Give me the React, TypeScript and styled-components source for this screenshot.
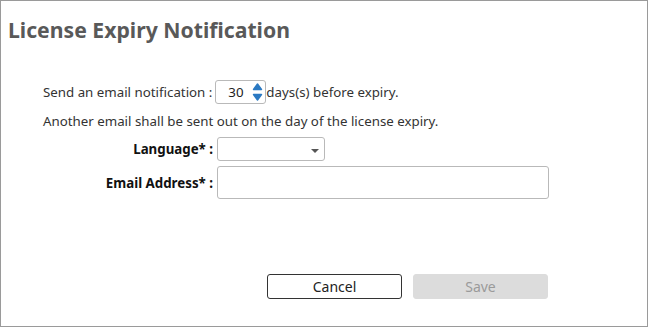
import React from "react";
import styled, { createGlobalStyle } from "styled-components";

const Global = createGlobalStyle`
  html, body { margin: 0; padding: 0; background: #fff; }
  body { font-family: "Noto Sans", "Open Sans", sans-serif; }
  * { box-sizing: border-box; }
`;

const Frame = styled.div`
  width: 648px;
  height: 327px;
  border: 1px solid #9a9a9a;
  display: flex;
  flex-direction: column;
  color: #333;
  font-size: 13.3px;
`;

const Title = styled.h1`
  margin: 15px 0 0 7px;
  font-size: 21.2px;
  line-height: 28px;
  font-weight: 700;
  color: #595959;
`;

const Body = styled.div`
  display: flex;
  flex-direction: column;
  padding-left: 42px;
  margin-top: 36px;
`;

const InlineRow = styled.div`
  display: flex;
  align-items: center;
  height: 24px;
  white-space: nowrap;
`;

const Text = styled.span`
  line-height: 18px;
`;

const NumberBox = styled.div`
  margin-left: 3px;
  width: 51px;
  height: 24px;
  border: 1px solid #b9b9b9;
  border-radius: 3px;
  display: flex;
  align-items: center;
  justify-content: space-between;
  padding: 0 2px 0 12px;
  color: #222;
`;

const Note = styled.div`
  margin-top: 8px;
  line-height: 18px;
`;

const FormGrid = styled.div`
  display: grid;
  grid-template-columns: 170px auto;
  column-gap: 4px;
  row-gap: 5px;
  margin-top: 7px;
  align-items: center;
`;

const Label = styled.label`
  text-align: right;
  font-weight: 700;
  color: #111;
  white-space: nowrap;
`;

const SelectBox = styled.div`
  width: 108px;
  height: 24px;
  border: 1px solid #b9b9b9;
  border-radius: 3px;
  display: flex;
  align-items: center;
  justify-content: flex-end;
  padding: 3px 5px 0 0;
`;

const TextInput = styled.div`
  width: 332px;
  height: 33px;
  border: 1px solid #b9b9b9;
  border-radius: 3px;
`;

const Buttons = styled.div`
  display: flex;
  gap: 11px;
  margin: auto 0 27px 266px;
`;

const Button = styled.button<{ $primary?: boolean }>`
  width: 135px;
  height: 25px;
  border-radius: 3px;
  font-family: inherit;
  font-size: 14px;
  padding: 0;
  border: 1px solid ${(p) => (p.$primary ? "#dcdcdc" : "#333")};
  background: ${(p) => (p.$primary ? "#dcdcdc" : "#fff")};
  color: ${(p) => (p.$primary ? "#9a9a9a" : "#222")};
`;

const Spinner = () => (
  <svg width="11" height="20" viewBox="0 0 11 20">
    <path d="M5.5 2 L9.5 7.5 H1.5 Z" fill="#2b79c2" stroke="#2b79c2" strokeWidth="1.4" strokeLinejoin="round" />
    <path d="M5.5 18 L9.5 12.5 H1.5 Z" fill="#2b79c2" stroke="#2b79c2" strokeWidth="1.4" strokeLinejoin="round" />
  </svg>
);

const Caret = () => (
  <svg width="8" height="4" viewBox="0 0 8 4">
    <path d="M0 0 H8 L4 4 Z" fill="#555" />
  </svg>
);

export default function App() {
  return (
    <>
      <Global />
      <Frame>
        <Title>License Expiry Notification</Title>
        <Body>
          <InlineRow>
            <Text>Send an email notification :</Text>
            <NumberBox>
              <span>30</span>
              <Spinner />
            </NumberBox>
            <Text>days(s) before expiry.</Text>
          </InlineRow>
          <Note>Another email shall be sent out on the day of the license expiry.</Note>
          <FormGrid>
            <Label>Language* :</Label>
            <SelectBox>
              <Caret />
            </SelectBox>
            <Label>Email Address* :</Label>
            <TextInput />
          </FormGrid>
        </Body>
        <Buttons>
          <Button>Cancel</Button>
          <Button $primary disabled>Save</Button>
        </Buttons>
      </Frame>
    </>
  );
}
